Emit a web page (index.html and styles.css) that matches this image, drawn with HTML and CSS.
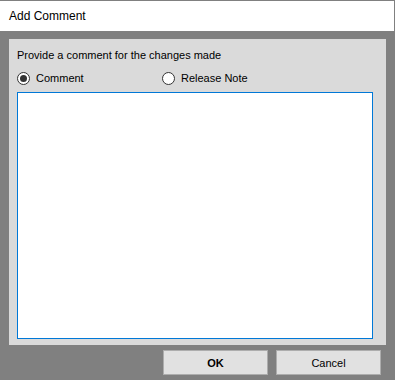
FILE: index.html
```html
<!DOCTYPE html>
<html lang="en">
<head>
<meta charset="UTF-8">
<title>Add Comment</title>
<link rel="stylesheet" href="styles.css">
</head>
<body>
<div class="window">
    <div class="title-bar">Add Comment</div>
    <div class="panel">
        <div class="prompt">Provide a comment for the changes made</div>
        <div class="options">
            <label class="option option-comment">
                <span class="radio checked"></span>
                <span>Comment</span>
            </label>
            <label class="option">
                <span class="radio"></span>
                <span>Release Note</span>
            </label>
        </div>
        <div class="comment-box"></div>
    </div>
    <div class="buttons">
        <button class="btn btn-ok">OK</button>
        <button class="btn">Cancel</button>
    </div>
</div>
</body>
</html>
```

FILE: styles.css
```css
html, body {
    margin: 0;
    padding: 0;
    background-color: #808080;
}
body {
    font-family: "Liberation Sans", Arial, sans-serif;
    font-size: 11px;
    color: #000;
    width: 395px;
    height: 380px;
    overflow: hidden;
}
.title-bar {
    margin: 1px 1px 0 0;
    height: 30px;
    line-height: 30px;
    background-color: #fff;
    padding-left: 9px;
    font-size: 12px;
}
.panel {
    margin: 8px 0 0 9px;
    width: 377px;
    height: 306px;
    background-color: #dadada;
    box-sizing: border-box;
    padding: 9px 0 0 8px;
}
.prompt {
    height: 15px;
    line-height: 15px;
}
.options {
    display: flex;
    margin-top: 8px;
    height: 14px;
}
.option {
    display: flex;
    align-items: center;
    gap: 6px;
}
.option-comment {
    width: 145px;
}
.radio {
    width: 11px;
    height: 11px;
    border: 1px solid #333;
    border-radius: 50%;
    background-color: #fff;
    position: relative;
}
.radio.checked::after {
    content: "";
    position: absolute;
    left: 2px;
    top: 2px;
    width: 7px;
    height: 7px;
    border-radius: 50%;
    background-color: #333;
}
.comment-box {
    margin-top: 7px;
    width: 356px;
    height: 247px;
    box-sizing: border-box;
    border: 1px solid #0078d7;
    background-color: #fff;
}
.buttons {
    display: flex;
    gap: 8px;
    margin: 5px 0 0 163px;
}
.btn {
    width: 105px;
    height: 25px;
    margin: 0;
    padding: 0;
    border: 1px solid #adadad;
    background-color: #e1e1e1;
    font-family: "Liberation Sans", Arial, sans-serif;
    font-size: 11px;
    color: #000;
}
.btn-ok {
    font-weight: bold;
}
```
